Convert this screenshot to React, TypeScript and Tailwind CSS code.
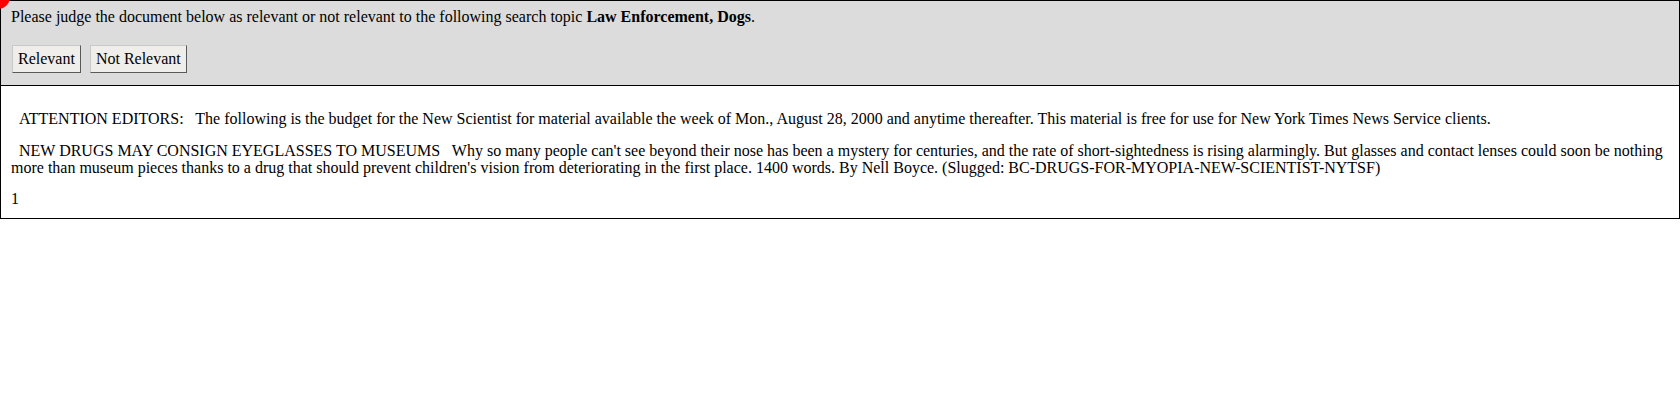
import React from 'react'

const SERIF = "font-['Liberation_Serif','Times_New_Roman',serif]"

function JudgeButton({ label }: { label: string }) {
  return (
    <button
      type="button"
      className="h-[28px] px-[5px] bg-[#f0eeea] border border-t-[#c8c8c8] border-l-[#c8c8c8] border-b-[#5a5a5a] border-r-[#5a5a5a] text-[16px] leading-none text-black"
    >
      {label}
    </button>
  )
}

export default function App() {
  return (
    <div className={`${SERIF} relative bg-white text-black text-[16px] min-h-[400px]`}>
      {/* marker in the corner */}
      <span className="absolute -left-[14px] -top-[15px] w-[24px] h-[24px] rounded-full bg-[#ff0000] z-10" />

      <div className="border border-black">
        <div className="bg-[#dcdcdc] border-b border-black px-[10px] pt-[7px] pb-[12px]">
          <p className="leading-[18px]">
            Please judge the document below as relevant or not relevant to the following search topic{' '}
            <b>Law Enforcement, Dogs</b>.
          </p>
          <div className="flex gap-[9px] mt-[19px] pl-[1px]">
            <JudgeButton label="Relevant" />
            <JudgeButton label="Not Relevant" />
          </div>
        </div>

        <div className="px-[10px] pt-[24px] pb-[11px] leading-[17px]">
          <p className="whitespace-pre-wrap">
            {'  ATTENTION EDITORS:   The following is the budget for the New Scientist for material available the week of Mon., August 28, 2000 and anytime thereafter. This material is free for use for New York Times News Service clients.'}
          </p>
          <p className="whitespace-pre-wrap mt-[15px]">
            {"  NEW DRUGS MAY CONSIGN EYEGLASSES TO MUSEUMS   Why so many people can't see beyond their nose has been a mystery for centuries, and the rate of short-sightedness is rising alarmingly. But glasses and contact lenses could soon be nothing more than museum pieces thanks to a drug that should prevent children's vision from deteriorating in the first place. 1400 words. By Nell Boyce. (Slugged: BC-DRUGS-FOR-MYOPIA-NEW-SCIENTIST-NYTSF)"}
          </p>
          <p className="mt-[14px]">1</p>
        </div>
      </div>
    </div>
  )
}
